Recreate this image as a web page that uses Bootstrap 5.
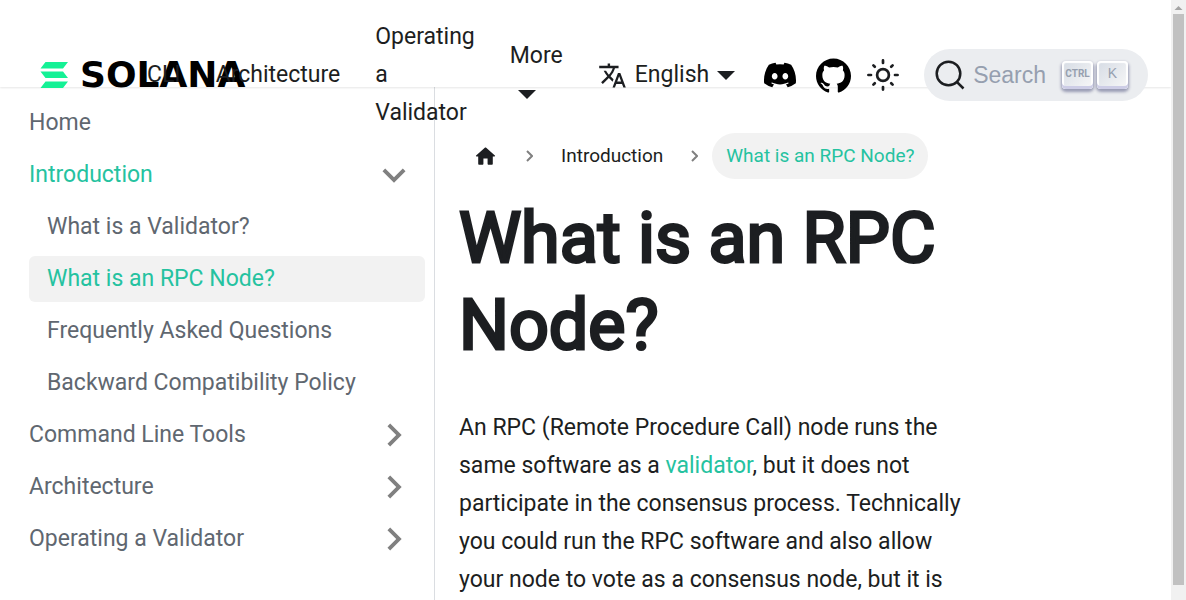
<!DOCTYPE html>
<html lang="en">
<head>
<meta charset="utf-8">
<meta name="viewport" content="width=device-width, initial-scale=1">
<title>What is an RPC Node? | Solana Docs</title>
<link href="https://cdn.jsdelivr.net/npm/bootstrap@5.3.0/dist/css/bootstrap.min.css" rel="stylesheet">
<style>
  :root { --ink: #1c1e21; --accent: #25c2a0; --soft: #f2f2f2; }
  body { font: 400 23px/38px Roboto, "Liberation Sans", sans-serif; color: var(--ink); background: #fff; }
  a { color: inherit; text-decoration: none; }
  svg { display: block; flex: none; }

  /* Top bar: fixed height, taller menus spill below it */
  .topbar { height: 87px; padding: 18px 23px 0 40px; box-shadow: 0 1px 2px rgba(0,0,0,.1); z-index: 5; }
  .topbar-row { height: 114px; }
  .brand { width: 72px; margin-right: 35px; gap: 12px; }
  .wordmark { font: 700 36px/36px "DejaVu Sans", sans-serif; color: #000; }
  .menu { gap: 35px; z-index: 1; }
  .wrap-tight { width: min-content; }
  .caret { display: inline-block; width: 18px; border: 9px solid transparent; border-top-color: currentColor; border-bottom: 0; }
  .tools { gap: 16px; }
  .search-btn { height: 52px; padding: 0 20px 0 11px; border: 0; border-radius: 26px; background: #ebedf0; margin-left: 9px;
    color: #969faf; font: 23px/38px "Liberation Sans", sans-serif; }
  .keycap { width: 31px; height: 28px; margin-right: 4px; padding: 0 0 3px; border-radius: 4px; color: #969faf; background: linear-gradient(-225deg, #d5dbe4, #f8f8f8);
    box-shadow: inset 0 -3px 0 0 #cdcde6, inset 0 0 1px 2px #fff, 0 2px 3px 1px rgba(30,35,90,.4); font: 14px/25px "Liberation Sans", sans-serif; }
  .keycap-ctrl { font: 700 10px/25px Roboto, sans-serif; }

  /* Sidebar */
  .side { flex: 0 0 435px; border-right: 1px solid #dadde1; padding: 13px 9px 0 29px; color: #606770; }
  .side li { margin-bottom: 6px; }
  .side a { display: flex; align-items: center; justify-content: space-between; height: 46px; border-radius: 6px; padding-right: 8px; }
  .side ul ul a { padding-left: 18px; }
  .side ul ul { margin-top: 6px; }
  .side .on { color: var(--accent); }
  .side ul ul .on { background: var(--soft); }

  /* Article */
  .doc { padding: 46px 18px 0 24px; }
  .crumbs { font-size: 19px; line-height: 30px; }
  .crumbs a, .crumbs .here { display: block; border-radius: 23px; padding: 8px 14px; }
  .crumbs .here { background: var(--soft); color: var(--accent); }
  .crumbs .sep { margin: 0 14px; }
  h1 { font-size: 70px; line-height: 87px; font-weight: 400; -webkit-text-stroke: 3px currentColor; margin: 16px 0 40px; }
  .doc p a { color: var(--accent); }

  /* Scroll gutter */
  .gutter { flex: 0 0 15px; background: #f1f1f1; padding: 0 2px 15px; }
  .gutter-thumb { background: #c1c1c1; width: 11px; }
</style>
</head>
<body>
<div class="d-flex vh-100 overflow-hidden">
  <div class="d-flex flex-column flex-grow-1 overflow-hidden">
    <header class="topbar bg-white position-relative flex-shrink-0">
      <nav class="topbar-row d-flex align-items-center">
        <a class="brand d-flex align-items-center" href="#" aria-label="Solana">
          <svg width="28" height="26" viewBox="0 0 28 26" fill="#14f195"><path d="M5.500 0H28l-5 6.500H.5zM0.500 9.500H23l5 6.500H5.500zM5.500 19.500H28l-5 6.500H.5z"/></svg>
          <span class="wordmark">SOLANA</span>
        </a>
        <div class="menu d-flex align-items-center position-relative">
          <a href="#">CLI</a>
          <a href="#">Architecture</a>
          <a class="wrap-tight" href="#">Operating a Validator</a>
          <a class="wrap-tight" href="#">More <span class="caret ms-2 align-middle"></span></a>
          <a class="d-flex align-items-center" href="#">
            <svg class="me-2" width="29" height="29" viewBox="0 0 24 24" fill="currentColor"><path d="M12.870 15.070l-2.540-2.510.03-.03c1.740-1.940 2.980-4.170 3.710-6.530H17V4h-7V2H8v2H1v1.990h11.170C11.500 7.920 10.440 9.750 9 11.350 8.070 10.320 7.300 9.190 6.690 8h-2c.73 1.630 1.730 3.170 2.980 4.560l-5.090 5.020L4 19l5-5 3.110 3.110.76-2.040zM18.500 10h-2L12 22h2l1.120-3h4.750L21 22h2l-4.500-12zm-2.620 7l1.620-4.330L19.120 17h-3.240z"/></svg>
            English<span class="caret ms-2"></span>
          </a>
        </div>
        <div class="tools d-flex align-items-center ms-auto text-black">
          <a class="me-1" href="#" aria-label="Discord"><svg width="32" height="32" viewBox="0 0 24 24" fill="currentColor"><path d="M20.317 4.370a19.791 19.791 0 0 0-4.885-1.515.074.074 0 0 0-.079.037c-.21.375-.444.864-.608 1.250a18.270 18.270 0 0 0-5.487 0 12.640 12.640 0 0 0-.617-1.250.077.077 0 0 0-.079-.037A19.736 19.736 0 0 0 3.677 4.370a.07.07 0 0 0-.032.027C.533 9.046-.32 13.580.099 18.058a.082.082 0 0 0 .031.057 19.900 19.900 0 0 0 5.993 3.030.078.078 0 0 0 .084-.028c.462-.63.874-1.295 1.226-1.994a.076.076 0 0 0-.041-.106 13.107 13.107 0 0 1-1.872-.892.077.077 0 0 1-.008-.128c.126-.094.252-.192.372-.291a.074.074 0 0 1 .078-.01c3.927 1.793 8.180 1.793 12.061 0a.074.074 0 0 1 .079.009c.12.099.246.198.373.292a.077.077 0 0 1-.007.128 12.299 12.299 0 0 1-1.873.891.077.077 0 0 0-.041.107c.36.698.772 1.363 1.225 1.993a.076.076 0 0 0 .084.029 19.839 19.839 0 0 0 6.002-3.030.077.077 0 0 0 .032-.055c.5-5.177-.838-9.674-3.549-13.660a.061.061 0 0 0-.031-.028zM8.020 15.331c-1.183 0-2.157-1.086-2.157-2.419s.956-2.419 2.157-2.419c1.210 0 2.176 1.095 2.157 2.419 0 1.333-.956 2.419-2.157 2.419zm7.975 0c-1.183 0-2.157-1.086-2.157-2.419s.955-2.419 2.157-2.419c1.210 0 2.176 1.095 2.157 2.419 0 1.333-.946 2.419-2.157 2.419z"/></svg></a>
          <a href="#" aria-label="GitHub"><svg width="35" height="35" viewBox="0 0 24 24" fill="currentColor"><path d="M12 .297c-6.630 0-12 5.373-12 12 0 5.303 3.438 9.800 8.205 11.385.6.113.82-.258.82-.577 0-.285-.01-1.040-.015-2.040-3.338.724-4.042-1.610-4.042-1.610C4.422 18.070 3.633 17.700 3.633 17.700c-1.087-.744.084-.729.084-.729 1.205.084 1.838 1.236 1.838 1.236 1.070 1.835 2.809 1.305 3.495.998.108-.776.417-1.305.76-1.605-2.665-.3-5.466-1.332-5.466-5.930 0-1.310.465-2.380 1.235-3.220-.135-.303-.54-1.523.105-3.176 0 0 1.005-.322 3.300 1.230.96-.267 1.980-.399 3-.405 1.020.006 2.040.138 3 .405 2.280-1.552 3.285-1.230 3.285-1.230.645 1.653.24 2.873.12 3.176.765.84 1.230 1.910 1.230 3.220 0 4.610-2.805 5.625-5.475 5.920.42.36.81 1.096.81 2.220 0 1.606-.015 2.896-.015 3.286 0 .315.21.69.825.57C20.565 22.092 24 17.592 24 12.297c0-6.627-5.373-12-12-12"/></svg></a>
          <button class="btn border-0 p-0" type="button" aria-label="Switch theme">
            <svg width="32" height="32" viewBox="-16 -16 32 32" fill="none" stroke="#1c1e21" stroke-width="2.700" stroke-linecap="round"><circle r="5.900"/><path d="M0-14.600v2.600M0 14.600v-2.600M-14.600 0h2.600M14.600 0h-2.600M-9.600-9.600l1.400 1.400M9.600-9.600l-1.400 1.400M-9.600 9.600l1.400-1.400M9.600 9.600l-1.400-1.400"/></svg>
          </button>
          <button class="search-btn d-flex align-items-center" type="button">
            <svg class="me-2" width="30" height="30" viewBox="0 0 30 30" fill="none" stroke="#1c1e21" stroke-width="2.500"><circle cx="13.500" cy="13.500" r="11.800"/><path d="M21.800 21.800L28.500 28.500"/></svg>
            <span class="me-3">Search</span>
            <kbd class="keycap keycap-ctrl">CTRL</kbd><kbd class="keycap m-0">K</kbd>
          </button>
        </div>
      </nav>
    </header>

    <div class="d-flex flex-grow-1">
      <aside class="side">
        <ul class="list-unstyled m-0">
          <li><a href="#">Home</a></li>
          <li>
            <a class="on" href="#">Introduction <svg width="46" height="46" viewBox="0 0 24 24" fill="#808080"><path d="M16.590 8.590L12 13.170 7.410 8.590 6 10l6 6 6-6z"/></svg></a>
            <ul class="list-unstyled">
              <li><a href="#">What is a Validator?</a></li>
              <li><a class="on" href="#">What is an RPC Node?</a></li>
              <li><a href="#">Frequently Asked Questions</a></li>
              <li><a href="#">Backward Compatibility Policy</a></li>
            </ul>
          </li>
          <li><a href="#">Command Line Tools <svg width="46" height="46" viewBox="0 0 24 24" fill="#808080"><path d="M8.590 7.410L13.170 12l-4.580 4.590L10 18l6-6-6-6z"/></svg></a></li>
          <li><a href="#">Architecture <svg width="46" height="46" viewBox="0 0 24 24" fill="#808080"><path d="M8.590 7.410L13.170 12l-4.580 4.590L10 18l6-6-6-6z"/></svg></a></li>
          <li><a href="#">Operating a Validator <svg width="46" height="46" viewBox="0 0 24 24" fill="#808080"><path d="M8.590 7.410L13.170 12l-4.580 4.590L10 18l6-6-6-6z"/></svg></a></li>
        </ul>
      </aside>
      <main class="flex-grow-1">
        <div class="row g-0">
          <article class="doc col-9">
            <nav class="crumbs d-flex align-items-center" aria-label="breadcrumb">
              <a href="#" aria-label="Home"><svg width="25" height="25" viewBox="0 0 24 24" fill="currentColor"><path d="M10 19v-5h4v5c0 .55.45 1 1 1h3c.55 0 1-.45 1-1v-7h1.700c.46 0 .68-.57.33-.87L12.670 3.600c-.38-.34-.96-.34-1.340 0l-8.360 7.530c-.34.3-.13.87.33.87H5v7c0 .55.45 1 1 1h3c.55 0 1-.45 1-1z"/></svg></a>
              <svg class="sep" width="7" height="12" viewBox="0 0 7 12" fill="none" stroke="#808080" stroke-width="2"><path d="M1 1l5 5-5 5"/></svg>
              <a href="#">Introduction</a>
              <svg class="sep" width="7" height="12" viewBox="0 0 7 12" fill="none" stroke="#808080" stroke-width="2"><path d="M1 1l5 5-5 5"/></svg>
              <span class="here text-nowrap">What is an RPC Node?</span>
            </nav>
            <h1>What is an RPC Node?</h1>
            <p>An RPC (Remote Procedure Call) node runs the same software as a <a href="#">validator</a>, but it does not participate in the consensus process. Technically you could run the RPC software and also allow your node to vote as a consensus node, but it is</p>
          </article>
        </div>
      </main>
    </div>
  </div>
  <div class="gutter d-flex flex-column align-items-center" aria-hidden="true">
    <svg width="11" height="14" viewBox="0 0 11 14" fill="#a3a3a3"><path d="M5.500 6L9.500 10h-8z"/></svg>
    <div class="gutter-thumb flex-grow-1"></div>
  </div>
</div>
<script src="https://cdn.jsdelivr.net/npm/bootstrap@5.3.0/dist/js/bootstrap.bundle.min.js"></script>
</body>
</html>
